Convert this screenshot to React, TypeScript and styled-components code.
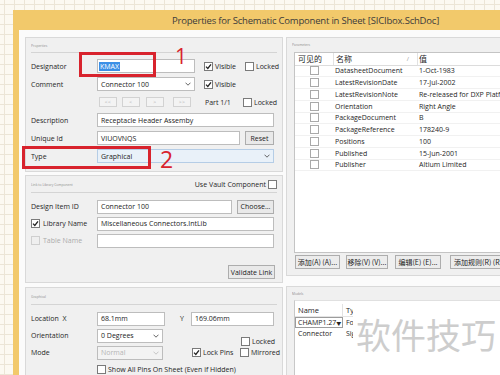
import React from 'react';
import styled, { createGlobalStyle, css } from 'styled-components';

const GlobalStyle = createGlobalStyle`
  html, body { margin: 0; padding: 0; }
  body {
    width: 500px; height: 375px; overflow: hidden;
    background-color: #fcf9f1;
    background-image:
      linear-gradient(#ece5d6 1px, transparent 1px),
      linear-gradient(90deg, #ece5d6 1px, transparent 1px);
    background-size: 10px 10px;
    background-position: 4px 4px;
    font-family: "Open Sans", "Noto Sans", "Noto Sans CJK SC", sans-serif;
  }
`;

const Page = styled.div`
  width: 500px; height: 375px; overflow: hidden; position: relative;
  padding: 10px 0 0 13px; box-sizing: border-box;
`;

const Window = styled.div`
  width: 540px; height: 420px; background: #f2c96b;
  display: flex; flex-direction: column;
`;

const TitleBar = styled.div`
  height: 20px; flex: none; display: flex; align-items: center;
  padding-left: 159px; font-size: 9.5px; letter-spacing: -0.2px; color: #3b3b3b; white-space: nowrap;
`;

const Body = styled.div`
  flex: 1; margin-left: 6px; background: #fbfbfb; padding: 7px 0 0 6px;
  display: grid; grid-template-columns: 258px 1fr; column-gap: 3px; align-items: start;
`;

const Column = styled.div<{ $gap: number }>`
  display: flex; flex-direction: column; gap: ${p => p.$gap}px;
`;

const Panel = styled.div<{ $h: number }>`
  background: #f0f0f0; border: 1px solid #d9d9d9; box-sizing: border-box;
  height: ${p => p.$h}px; display: flex; flex-direction: column;
`;

const PanelHead = styled.div<{ $h: number; $line?: boolean }>`
  height: ${p => p.$h}px; flex: none; margin: 0 5px; display: flex;
  align-items: center; justify-content: space-between;
  ${p => p.$line && css`border-bottom: 1px solid #d4d4d4;`}
`;

const Tiny = styled.span`
  font-size: 8px; color: #8e8e8e; white-space: nowrap;
  transform: scale(0.42); transform-origin: left center; display: inline-block;
`;

const Rows = styled.div<{ $top: number }>`
  padding: ${p => p.$top}px 0 0 5px; display: flex; flex-direction: column;
`;

const Row = styled.div<{ $h: number }>`
  height: ${p => p.$h}px; display: flex; align-items: center; flex: none;
`;

const Label = styled.div<{ $dim?: boolean }>`
  width: 66px; flex: none; font-size: 7px; color: ${p => (p.$dim ? '#a8a8a8' : '#262626')};
  display: flex; align-items: center; white-space: nowrap;
`;

const Field = styled.div<{ $w: number; $tint?: boolean; $dim?: boolean }>`
  width: ${p => p.$w}px; height: 14px; box-sizing: border-box; flex: none;
  border: 1px solid ${p => (p.$tint ? '#b5cde6' : '#bdbdbd')};
  background: ${p => (p.$tint ? '#e9f1f9' : p.$dim ? '#f3f3f3' : '#ffffff')};
  color: ${p => (p.$dim ? '#b5b5b5' : '#222')};
  font-size: 7px; padding: 0 3px; display: flex; align-items: center;
  justify-content: space-between; white-space: nowrap; overflow: hidden;
`;

const Selected = styled.span`
  background: #3b8fe6; color: #fff; padding: 0 1px; margin-left: -2px;
`;

const Chevron = ({ dim }: { dim?: boolean }) => (
  <svg width="6" height="4" viewBox="0 0 6 4">
    <path d="M0.5 0.7 L3 3.2 L5.5 0.7" fill="none" stroke={dim ? '#c0c0c0' : '#555'} strokeWidth="0.9" />
  </svg>
);

const Box = styled.span<{ $dim?: boolean; $soft?: boolean }>`
  width: 9px; height: 9px; box-sizing: border-box; flex: none;
  border: 1px solid ${p => (p.$dim ? '#cfcfcf' : p.$soft ? '#a9a9a9' : '#7a7a7a')};
  background: ${p => (p.$dim ? '#efefef' : '#fff')};
  display: inline-flex; align-items: center; justify-content: center;
`;

const Check = ({ on, dim, soft }: { on?: boolean; dim?: boolean; soft?: boolean }) => (
  <Box $dim={dim} $soft={soft}>
    {on && (
      <svg width="7" height="7" viewBox="0 0 7 7">
        <path d="M1 3.6 L2.8 5.4 L6 1.3" fill="none" stroke="#222" strokeWidth="1.3" />
      </svg>
    )}
  </Box>
);

const CheckGroup = styled.div<{ $ml?: number; $w?: number; $end?: boolean }>`
  display: flex; align-items: center; gap: 2px; flex: none;
  margin-left: ${p => p.$ml ?? 0}px; ${p => p.$w && css`width: ${p.$w}px;`}
  ${p => p.$end && css`align-self: flex-end; margin-bottom: -2px;`}
  font-size: 7px; color: #262626; white-space: nowrap;
`;

const Btn = styled.div<{ $w: number; $ml?: number }>`
  width: ${p => p.$w}px; height: 14px; box-sizing: border-box; flex: none;
  margin-left: ${p => p.$ml ?? 0}px; border: 1px solid #adadad; background: #e9e9e9;
  font-size: 7px; color: #222; display: flex; align-items: center; justify-content: center;
  white-space: nowrap;
`;

const NavBtn = styled.div<{ $ml: number }>`
  width: 18px; height: 10px; box-sizing: border-box; flex: none; margin-left: ${p => p.$ml}px;
  border: 1px solid #d2d2d2; background: #f3f3f3; color: #b0b0b0; font-size: 5px;
  display: flex; align-items: center; justify-content: center; letter-spacing: 0.5px;
`;

const PlainText = styled.span<{ $w?: number; $ml?: number }>`
  font-size: 7px; color: #262626; flex: none; white-space: nowrap;
  margin-left: ${p => p.$ml ?? 0}px; ${p => p.$w && css`width: ${p.$w}px;`}
`;

const Footer = styled.div`
  flex: 1; display: flex; justify-content: flex-end; align-items: flex-end;
  padding: 0 7px 3px 0;
`;

const TableBox = styled.div`
  margin-left: 7px; height: 201px; background: #fff; border: 1px solid #c4c4c4;
  border-right: none; box-sizing: border-box; overflow: hidden; flex: none;
`;

const PRow = styled.div<{ $head?: boolean }>`
  display: grid; grid-template-columns: 39px 84px 1fr;
  height: ${p => (p.$head ? '12.5px' : '11.75px')}; box-sizing: border-box;
  border-bottom: 1px solid ${p => (p.$head ? '#dcdcdc' : '#f1f1f1')};
  font-size: ${p => (p.$head ? '8px' : '7px')}; color: #1e1e1e;
`;

const PCell = styled.div<{ $center?: boolean; $sep?: boolean; $pl?: number }>`
  display: flex; align-items: center; white-space: nowrap; overflow: hidden;
  padding-left: ${p => p.$pl ?? 0}px;
  justify-content: ${p => (p.$center ? 'center' : 'space-between')};
  ${p => p.$sep && css`border-right: 1px solid #e2e2e2;`}
`;

const SortMark = styled.span`
  color: #9a9a9a; font-size: 6px; margin-right: 8px;
`;

const BtnRow = styled.div`
  display: flex; margin: 2px 0 0 8px; gap: 0;
`;

const CnBtn = styled(Btn)`
  font-family: "Noto Sans CJK SC", "Open Sans", sans-serif; font-size: 7px; background: #ececec;
`;

const ModelsArea = styled.div`
  margin-left: 7px; flex: 1; background: #fff; border-left: 1px solid #c8c8c8;
  border-top: 1px solid #e0e0e0; padding-top: 3px;
`;

const MTable = styled.div`
  width: 58px; overflow: hidden;
`;

const MRow = styled.div<{ $head?: boolean }>`
  display: grid; grid-template-columns: 48px 40px; height: 11.5px;
  font-size: ${p => (p.$head ? '7.5px' : '7px')}; color: #1e1e1e;
  ${p => p.$head && css`border-bottom: 1px solid #e4e4e4;`}
`;

const MCell = styled.div<{ $sel?: boolean; $sep?: boolean }>`
  display: flex; align-items: center; justify-content: space-between; white-space: nowrap;
  overflow: hidden; padding-left: 3px; box-sizing: border-box;
  ${p => p.$sep && css`border-right: 1px solid #e2e2e2;`}
  ${p => p.$sel && css`border: 1px solid #9c9c9c; padding-left: 2px;`}
`;

const DropArrow = styled.span`
  font-size: 5px; color: #222; margin-right: 2px;
`;

const RedBox = styled.div<{ $x: number; $y: number; $w: number; $h: number }>`
  position: absolute; left: ${p => p.$x}px; top: ${p => p.$y}px;
  width: ${p => p.$w}px; height: ${p => p.$h}px; box-sizing: border-box;
  border: 3px solid #d8232d;
`;

const RedNum = styled.div<{ $x: number; $y: number; $s: number }>`
  position: absolute; left: ${p => p.$x}px; top: ${p => p.$y}px;
  font-size: ${p => p.$s}px; line-height: 1; color: #d8232d; font-family: "Open Sans", sans-serif;
`;

const Watermark = styled.div`
  position: absolute; left: 356px; top: 316px; font-size: 35px; line-height: 1;
  color: #cdcdcd; font-family: "Noto Sans CJK SC", sans-serif; font-weight: 400;
  letter-spacing: 0px; white-space: nowrap;
`;

const params: [string, string][] = [
  ['DatasheetDocument', '1-Oct-1983'],
  ['LatestRevisionDate', '17-Jul-2002'],
  ['LatestRevisionNote', 'Re-released for DXP Platform.'],
  ['Orientation', 'Right Angle'],
  ['PackageDocument', 'B'],
  ['PackageReference', '178240-9'],
  ['Positions', '100'],
  ['Published', '15-Jun-2001'],
  ['Publisher', 'Altium Limited'],
];

export default function App() {
  return (
    <Page>
      <GlobalStyle />
      <Window>
        <TitleBar>Properties for Schematic Component in Sheet [SICIbox.SchDoc]</TitleBar>
        <Body>
          <Column $gap={3}>
            <Panel $h={135}>
              <PanelHead $h={14} $line><Tiny>Properties</Tiny></PanelHead>
              <Rows $top={4}>
                <Row $h={18}>
                  <Label>Designator</Label>
                  <Field $w={98}><span><Selected>KMAX</Selected></span></Field>
                  <CheckGroup $ml={9} $w={41}><Check on />Visible</CheckGroup>
                  <CheckGroup><Check />Locked</CheckGroup>
                </Row>
                <Row $h={18}>
                  <Label>Comment</Label>
                  <Field $w={98}><span>Connector 100</span><Chevron /></Field>
                  <CheckGroup $ml={9}><Check on />Visible</CheckGroup>
                </Row>
                <Row $h={18}>
                  <Label />
                  <NavBtn $ml={2}>&lt;&lt;</NavBtn>
                  <NavBtn $ml={5}>&lt;</NavBtn>
                  <NavBtn $ml={6}>&gt;</NavBtn>
                  <NavBtn $ml={9}>&gt;&gt;</NavBtn>
                  <PlainText $ml={14} $w={38}>Part 1/1</PlainText>
                  <CheckGroup><Check />Locked</CheckGroup>
                </Row>
                <Row $h={18}>
                  <Label>Description</Label>
                  <Field $w={177}><span>Receptacle Header Assemby</span></Field>
                </Row>
                <Row $h={18}>
                  <Label>Unique Id</Label>
                  <Field $w={143}><span>VIUOVNQS</span></Field>
                  <Btn $w={29} $ml={5}>Reset</Btn>
                </Row>
                <Row $h={18}>
                  <Label>Type</Label>
                  <Field $w={177} $tint><span>Graphical</span><Chevron /></Field>
                </Row>
              </Rows>
            </Panel>

            <Panel $h={108}>
              <PanelHead $h={16} $line>
                <Tiny>Link to Library Component</Tiny>
                <CheckGroup>Use Vault Component <Check /></CheckGroup>
              </PanelHead>
              <Rows $top={5}>
                <Row $h={17}>
                  <Label>Design Item ID</Label>
                  <Field $w={135}><span>Connector 100</span></Field>
                  <Btn $w={37} $ml={5}>Choose...</Btn>
                </Row>
                <Row $h={17}>
                  <Label><CheckGroup><Check on /><span style={{ marginLeft: 1 }}>Library Name</span></CheckGroup></Label>
                  <Field $w={177}><span>Miscellaneous Connectors.IntLib</span></Field>
                </Row>
                <Row $h={17}>
                  <Label $dim><CheckGroup style={{ color: '#ababab' }}><Check dim /><span style={{ marginLeft: 1 }}>Table Name</span></CheckGroup></Label>
                  <Field $w={177} />
                </Row>
              </Rows>
              <Footer><Btn $w={47}>Validate Link</Btn></Footer>
            </Panel>

            <Panel $h={120} style={{ marginTop: 1 }}>
              <PanelHead $h={16} $line><Tiny>Graphical</Tiny></PanelHead>
              <Rows $top={5}>
                <Row $h={17}>
                  <Label>Location&nbsp;&nbsp;X</Label>
                  <Field $w={68}><span>68.1mm</span></Field>
                  <PlainText $ml={15} $w={11}>Y</PlainText>
                  <Field $w={83}><span>169.06mm</span></Field>
                </Row>
                <Row $h={17}>
                  <Label>Orientation</Label>
                  <Field $w={66}><span>0 Degrees</span><Chevron /></Field>
                  <CheckGroup $ml={78} $end><Check />Locked</CheckGroup>
                </Row>
                <Row $h={17}>
                  <Label>Mode</Label>
                  <Field $w={66} $dim><span>Normal</span><Chevron dim /></Field>
                  <CheckGroup $ml={29} $w={48}><Check on />Lock Pins</CheckGroup>
                  <CheckGroup><Check />Mirrored</CheckGroup>
                </Row>
                <Row $h={17}>
                  <Label />
                  <CheckGroup><Check />Show All Pins On Sheet (Even if Hidden)</CheckGroup>
                </Row>
              </Rows>
            </Panel>
          </Column>

          <Column $gap={10}>
            <Panel $h={239}>
              <PanelHead $h={13} style={{ alignItems: 'flex-start', paddingTop: 1 }}>
                <Tiny>Parameters</Tiny>
              </PanelHead>
              <TableBox>
                <PRow $head>
                  <PCell $sep $pl={3}>可见的</PCell>
                  <PCell $sep $pl={2}><span>名称</span><SortMark>/</SortMark></PCell>
                  <PCell $pl={1}>值</PCell>
                </PRow>
                {params.map(([n, v]) => (
                  <PRow key={n}>
                    <PCell $center><Check soft /></PCell>
                    <PCell $pl={1}>{n}</PCell>
                    <PCell $pl={1}>{v}</PCell>
                  </PRow>
                ))}
              </TableBox>
              <BtnRow>
                <CnBtn $w={45}>添加(A) (A)...</CnBtn>
                <CnBtn $w={42} $ml={6}>移除(V) (V)...</CnBtn>
                <CnBtn $w={46} $ml={7}>编辑(E) (E)...</CnBtn>
                <CnBtn $w={62} $ml={9}>添加规则(R) (R)...</CnBtn>
              </BtnRow>
            </Panel>

            <Panel $h={120}>
              <PanelHead $h={13}><Tiny>Models</Tiny></PanelHead>
              <ModelsArea>
                <MTable>
                  <MRow $head>
                    <MCell $sep>Name</MCell>
                    <MCell>Type</MCell>
                  </MRow>
                  <MRow>
                    <MCell $sel>CHAMP1.27<DropArrow>▼</DropArrow></MCell>
                    <MCell>Footprint</MCell>
                  </MRow>
                  <MRow>
                    <MCell>Connector</MCell>
                    <MCell>Signal Integrity</MCell>
                  </MRow>
                </MTable>
              </ModelsArea>
            </Panel>
          </Column>
        </Body>
      </Window>

      <RedBox $x={79} $y={52} $w={77} $h={25} />
      <RedNum $x={175} $y={46} $s={21}>1</RedNum>
      <RedBox $x={22} $y={146} $w={129} $h={23} />
      <RedNum $x={160} $y={148} $s={23}>2</RedNum>
      <Watermark>软件技巧</Watermark>
    </Page>
  );
}
